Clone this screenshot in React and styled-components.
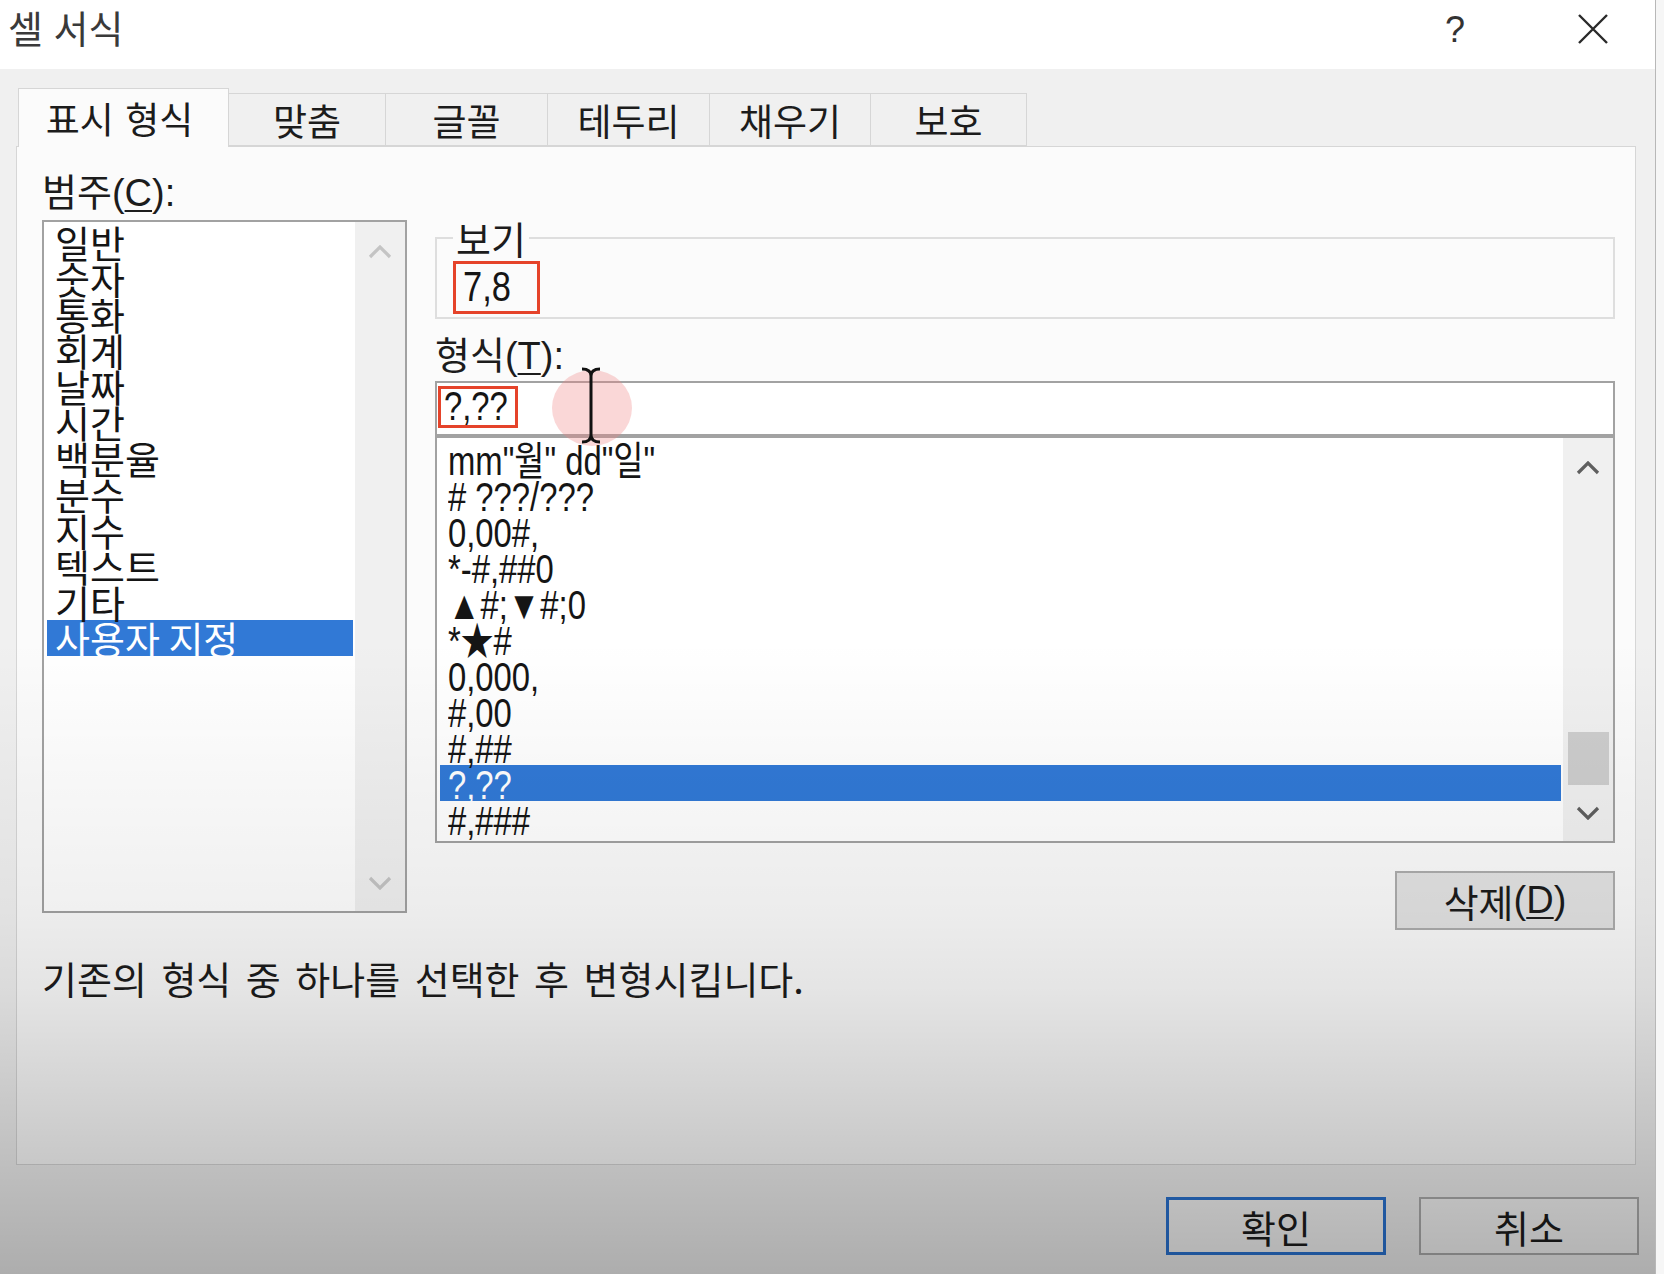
import React from "react";
import styled, { createGlobalStyle } from "styled-components";

const KR = `"Noto Sans CJK KR", "Noto Sans", sans-serif`;
const LAT = `"Liberation Sans", "Noto Sans CJK KR", sans-serif`;

const GlobalStyle = createGlobalStyle`
  html, body { margin: 0; padding: 0; background: #f6f6f6; }
  body { font-family: ${KR}; color: #1c1c1c; }
  * { box-sizing: border-box; }
`;

const Window = styled.div`
  position: relative;
  width: 1656px;
  height: 1274px;
  display: flex;
  flex-direction: column;
  background: #f0f0f0;
  border-right: 1px solid #b8b8b8;
  overflow: hidden;
`;

const TitleBar = styled.div`
  flex: none;
  height: 69px;
  background: #ffffff;
  display: flex;
  align-items: flex-start;
  padding: 6px 46px 0 8px;
`;

const Title = styled.div`
  flex: 1;
  font-size: 38px;
  line-height: 42px;
  color: #3a3a3a;
  word-spacing: 2px;
`;

const HelpGlyph = styled.span`
  font-family: "Liberation Sans", sans-serif;
  font-size: 36px;
  line-height: 40px;
  color: #333;
  margin: 4px 112px 0 0;
`;

const CloseButton = styled.div`
  width: 32px;
  height: 32px;
  margin-top: 7px;
  display: flex;
`;

const Body = styled.div`
  flex: 1;
  display: flex;
  flex-direction: column;
  padding: 19px 16px 0 16px;
`;

const TabRow = styled.div`
  display: flex;
  align-items: flex-end;
  height: 58px;
  padding-left: 3px;
  position: relative;
  z-index: 1;
`;

const Tab = styled.div`
  width: ${(p) => p.$w}px;
  height: ${(p) => (p.$active ? 59 : 53)}px;
  margin-left: -1px;
  margin-bottom: ${(p) => (p.$active ? "-1px" : "0")};
  display: flex;
  align-items: center;
  justify-content: center;
  padding-right: ${(p) => (p.$active ? 8 : 0)}px;
  font-size: 37px;
  word-spacing: 3px;
  color: #1c1c1c;
  background: ${(p) => (p.$active ? "#fbfbfb" : "#f0f0f0")};
  border: 1px solid #d6d6d6;
  border-bottom: ${(p) => (p.$active ? "none" : "1px solid #d6d6d6")};
`;

const Panel = styled.div`
  height: 1019px;
  margin-right: 3px;
  border: 1px solid #d6d6d6;
  background: #fbfbfb;
  padding: 23px 20px 0 25px;
  display: flex;
  flex-direction: column;
`;

const Columns = styled.div`
  display: grid;
  grid-template-columns: 365px 1fr;
  column-gap: 28px;
  align-items: start;
`;

const LeftCol = styled.div`
  display: flex;
  flex-direction: column;
`;

const RightCol = styled.div`
  display: flex;
  flex-direction: column;
  padding-top: 45px;
  position: relative;
`;

const FieldLabel = styled.div`
  font-size: 38px;
  line-height: 40px;
  height: 40px;
  white-space: nowrap;
  margin-top: ${(p) => p.$mt || 0}px;
`;

const Latin = styled.span`
  font-family: ${LAT};
  text-decoration: ${(p) => (p.$u ? "underline" : "none")};
  text-underline-offset: 4px;
  text-decoration-thickness: 2px;
`;

const ListBox = styled.div`
  height: ${(p) => p.$h}px;
  margin-top: ${(p) => p.$mt || 0}px;
  border: 2px solid #a2a2a2;
  background: #ffffff;
  display: flex;
`;

const Items = styled.div`
  flex: 1;
  padding: ${(p) => p.$pt}px 2px 0 3px;
`;

const Item = styled.div`
  height: 36px;
  line-height: 36px;
  padding-left: 8px;
  font-size: 38px;
  white-space: nowrap;
  color: ${(p) => (p.$selected ? "#ffffff" : "#151515")};
  background: ${(p) => (p.$selected ? "#3179d6" : "transparent")};
`;

const NarrowText = styled.span`
  display: inline-block;
  font-family: ${LAT};
  font-size: ${(p) => p.$size || 40}px;
  transform: scaleX(0.82);
  transform-origin: left center;
  white-space: pre;
`;

const Scrollbar = styled.div`
  width: 50px;
  flex: none;
  background: #f0f0f0;
  display: flex;
  flex-direction: column;
`;

const ArrowCell = styled.div`
  height: ${(p) => p.$h}px;
  flex: none;
  display: flex;
  align-items: center;
  justify-content: center;
`;

const Track = styled.div`
  flex: 1;
  display: flex;
  flex-direction: column;
  justify-content: flex-end;
  align-items: center;
`;

const Thumb = styled.div`
  width: 41px;
  height: 53px;
  background: #cdcdcd;
`;

const GroupBox = styled.fieldset`
  margin: 0;
  min-width: 0;
  border: 2px solid #dedede;
  padding: 0 14px 3px 16px;
`;

const GroupLegend = styled.legend`
  padding: 0 3px;
  font-size: 38px;
  line-height: 46px;
`;

const RedBox = styled.div`
  width: ${(p) => p.$w}px;
  height: ${(p) => p.$h}px;
  border: 3px solid #e5432a;
  line-height: ${(p) => p.$h - 7}px;
  padding-left: ${(p) => p.$pl}px;
  color: #151515;
  white-space: nowrap;
`;

const FormatInput = styled.div`
  position: relative;
  margin-top: 8px;
  height: 55px;
  border: 2px solid #a2a2a2;
  background: #ffffff;
  padding: 3px 1px;
`;

const CursorMark = styled.svg`
  position: absolute;
  left: 110px;
  top: -22px;
  pointer-events: none;
  z-index: 3;
`;

const Button = styled.div`
  width: 220px;
  height: ${(p) => p.$h || 58}px;
  display: flex;
  align-items: center;
  justify-content: center;
  font-size: 38px;
  color: #1c1c1c;
  background: ${(p) => p.$bg || "#e3e3e3"};
  border: ${(p) => (p.$primary ? "3px solid #2a73d2" : "2px solid #adadad")};
`;

const DeleteButton = styled(Button)`
  align-self: flex-end;
  margin-top: 28px;
`;

const Description = styled.div`
  margin-top: 25px;
  font-size: 38px;
  line-height: 46px;
  word-spacing: 6px;
  white-space: nowrap;
`;

const ButtonRow = styled.div`
  display: flex;
  justify-content: flex-end;
  gap: 33px;
  padding: 32px 0 0 0;
`;

const Shade = styled.div`
  position: absolute;
  inset: 0;
  pointer-events: none;
  z-index: 5;
  background: linear-gradient(
    to bottom,
    rgba(0, 0, 0, 0) 0px,
    rgba(0, 0, 0, 0) 640px,
    rgba(0, 0, 0, 0.03) 780px,
    rgba(0, 0, 0, 0.06) 910px,
    rgba(0, 0, 0, 0.09) 990px,
    rgba(0, 0, 0, 0.17) 1110px,
    rgba(0, 0, 0, 0.28) 1274px
  );
`;

const Chevron = ({ up, color }) => (
  <svg width="24" height="14" viewBox="0 0 24 14">
    <polyline
      points={up ? "2,12 12,2 22,12" : "2,2 12,12 22,2"}
      fill="none"
      stroke={color}
      strokeWidth="3.2"
      strokeLinejoin="miter"
    />
  </svg>
);

const tabs = [
  { label: "표시 형식", w: 211, active: true },
  { label: "맞춤", w: 158 },
  { label: "글꼴", w: 163 },
  { label: "테두리", w: 163 },
  { label: "채우기", w: 162 },
  { label: "보호", w: 157 },
];

const categories = [
  "일반", "숫자", "통화", "회계", "날짜", "시간", "백분율",
  "분수", "지수", "텍스트", "기타", "사용자 지정",
];

const formats = [
  'mm"월" dd"일"',
  "# ???/???",
  "0,00#,",
  "*-#,##0",
  "▲#;▼#;0",
  "*★#",
  "0,000,",
  "#,00",
  "#,##",
  "?,??",
  "#,###",
];

export default function App() {
  return (
    <>
      <GlobalStyle />
      <Window>
        <TitleBar>
          <Title>셀 서식</Title>
          <HelpGlyph>?</HelpGlyph>
          <CloseButton>
            <svg width="32" height="32" viewBox="0 0 32 32">
              <path d="M2 2 L30 30 M30 2 L2 30" stroke="#2a2a2a" strokeWidth="2.4" />
            </svg>
          </CloseButton>
        </TitleBar>
        <Body>
          <TabRow>
            {tabs.map((t) => (
              <Tab key={t.label} $w={t.w} $active={t.active}>
                {t.label}
              </Tab>
            ))}
          </TabRow>
          <Panel>
            <Columns>
              <LeftCol>
                <FieldLabel>
                  범주<Latin>(</Latin><Latin $u>C</Latin><Latin>):</Latin>
                </FieldLabel>
                <ListBox $h={693} $mt={10}>
                  <Items $pt={2}>
                    {categories.map((c, i) => (
                      <Item key={c} $selected={i === categories.length - 1}>
                        {c}
                      </Item>
                    ))}
                  </Items>
                  <Scrollbar>
                    <ArrowCell $h={60}>
                      <Chevron up color="#c4c4c4" />
                    </ArrowCell>
                    <Track />
                    <ArrowCell $h={56}>
                      <Chevron color="#c4c4c4" />
                    </ArrowCell>
                  </Scrollbar>
                </ListBox>
              </LeftCol>
              <RightCol>
                <GroupBox>
                  <GroupLegend>보기</GroupLegend>
                  <RedBox $w={87} $h={53} $pl={7}>
                    <NarrowText $size={42}>7,8</NarrowText>
                  </RedBox>
                </GroupBox>
                <FieldLabel $mt={14}>
                  형식<Latin>(</Latin><Latin $u>T</Latin><Latin>):</Latin>
                </FieldLabel>
                <FormatInput>
                  <RedBox $w={80} $h={42} $pl={3}>
                    <NarrowText $size={40}>?,??</NarrowText>
                  </RedBox>
                  <CursorMark width="90" height="90" viewBox="0 0 90 90">
                    <ellipse cx="45" cy="47" rx="40" ry="38" fill="rgba(238, 130, 130, 0.32)" />
                    <path
                      d="M35 8 Q44 8 44 15 L44 74 Q44 81 35 81 M53 8 Q44 8 44 15 M44 74 Q44 81 53 81"
                      fill="none"
                      stroke="#111"
                      strokeWidth="3"
                    />
                  </CursorMark>
                </FormatInput>
                <ListBox $h={407}>
                  <Items $pt={3}>
                    {formats.map((f, i) => (
                      <Item key={f} $selected={i === 9}>
                        <NarrowText>{f}</NarrowText>
                      </Item>
                    ))}
                  </Items>
                  <Scrollbar>
                    <ArrowCell $h={60}>
                      <Chevron up color="#5f5f5f" />
                    </ArrowCell>
                    <Track>
                      <Thumb />
                    </Track>
                    <ArrowCell $h={56}>
                      <Chevron color="#5f5f5f" />
                    </ArrowCell>
                  </Scrollbar>
                </ListBox>
                <DeleteButton $h={59}>
                  삭제<Latin>(</Latin><Latin $u>D</Latin><Latin>)</Latin>
                </DeleteButton>
              </RightCol>
            </Columns>
            <Description>기존의 형식 중 하나를 선택한 후 변형시킵니다.</Description>
          </Panel>
          <ButtonRow>
            <Button $primary $bg="#f6f6f6">확인</Button>
            <Button $bg="#f6f6f6">취소</Button>
          </ButtonRow>
        </Body>
        <Shade />
      </Window>
    </>
  );
}
